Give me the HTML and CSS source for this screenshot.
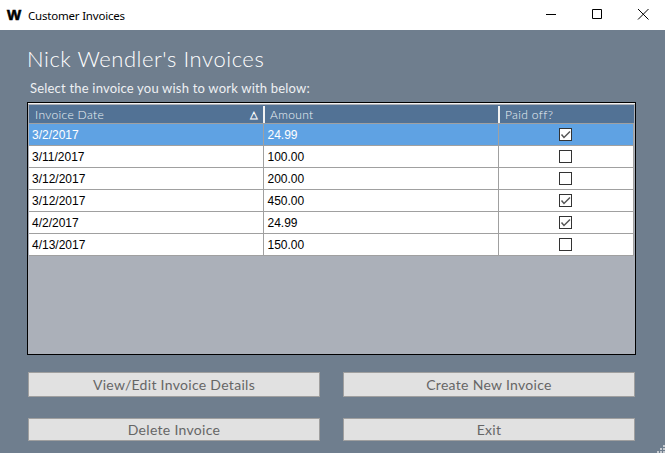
FILE: index.html
```html
<!DOCTYPE html>
<html lang="en">

<head>
    <meta charset="UTF-8">
    <title>Customer Invoices</title>
    <link rel="stylesheet" href="styles.css">
</head>

<body>
    <div class="titlebar">
        <span class="app_logo">W</span>
        <span class="app_name">Customer Invoices</span>
        <div class="win_btns">
            <svg class="win_btn" width="46" height="30" viewBox="0 0 46 30"><path d="M18 14.5H28" stroke="#000" fill="none"/></svg>
            <svg class="win_btn" width="46" height="30" viewBox="0 0 46 30"><path d="M18.5 9.5H27.5V18.5H18.5Z" stroke="#000" fill="none"/></svg>
            <svg class="win_btn" width="46" height="30" viewBox="0 0 46 30"><path d="M18 9L28.5 19.5M28.5 9L18 19.5" stroke="#000" fill="none"/></svg>
        </div>
    </div>

    <div class="content">
        <h1 class="heading">Nick Wendler's Invoices</h1>
        <p class="hint">Select the invoice you wish to work with below:</p>

        <div class="grid_box">
            <table class="grid">
                <thead>
                    <tr>
                        <th class="col_date"><span class="th_in">Invoice Date<span class="sort">&#9651;</span></span></th>
                        <th class="col_amount"><span class="th_in">Amount</span></th>
                        <th class="col_paid"><span class="th_in">Paid off?</span></th>
                    </tr>
                </thead>
                <tbody>
                    <tr class="selected">
                        <td>3/2/2017</td>
                        <td class="amount">24.99</td>
                        <td><span class="check checked"><svg width="11" height="11" viewBox="0 0 11 11"><path d="M1.5 5.5L4 8.5L10 2.5" stroke="#555" stroke-width="1.5" fill="none"/></svg></span></td>
                    </tr>
                    <tr>
                        <td>3/11/2017</td>
                        <td class="amount">100.00</td>
                        <td><span class="check"></span></td>
                    </tr>
                    <tr>
                        <td>3/12/2017</td>
                        <td class="amount">200.00</td>
                        <td><span class="check"></span></td>
                    </tr>
                    <tr>
                        <td>3/12/2017</td>
                        <td class="amount">450.00</td>
                        <td><span class="check checked"><svg width="11" height="11" viewBox="0 0 11 11"><path d="M1.5 5.5L4 8.5L10 2.5" stroke="#555" stroke-width="1.5" fill="none"/></svg></span></td>
                    </tr>
                    <tr>
                        <td>4/2/2017</td>
                        <td class="amount">24.99</td>
                        <td><span class="check checked"><svg width="11" height="11" viewBox="0 0 11 11"><path d="M1.5 5.5L4 8.5L10 2.5" stroke="#555" stroke-width="1.5" fill="none"/></svg></span></td>
                    </tr>
                    <tr>
                        <td>4/13/2017</td>
                        <td class="amount">150.00</td>
                        <td><span class="check"></span></td>
                    </tr>
                </tbody>
            </table>
        </div>

        <div class="buttons">
            <button class="btn tall">View/Edit Invoice Details</button>
            <button class="btn tall">Create New Invoice</button>
            <button class="btn">Delete Invoice</button>
            <button class="btn">Exit</button>
        </div>
    </div>

    <svg class="grip" width="9" height="9" viewBox="0 0 9 9" fill="#c4c9cf">
        <rect x="7" y="1" width="2" height="2"/>
        <rect x="4" y="4" width="2" height="2"/>
        <rect x="7" y="4" width="2" height="2"/>
        <rect x="1" y="7" width="2" height="2"/>
        <rect x="4" y="7" width="2" height="2"/>
        <rect x="7" y="7" width="2" height="2"/>
    </svg>
</body>

</html>
```

FILE: styles.css
```css
html, body {
    margin: 0;
    height: 453px;
    overflow: hidden;
}

body {
    position: relative;
    display: flex;
    flex-direction: column;
    background-color: #6f7e8e;
    font-family: "Lato", "Liberation Sans", sans-serif;
}

.titlebar {
    height: 30px;
    flex: none;
    display: flex;
    align-items: center;
    background-color: white;
    color: black;
}

.app_logo {
    width: 14px;
    margin-left: 7px;
    font-family: "Liberation Sans", sans-serif;
    font-weight: bold;
    font-size: 15px;
    -webkit-text-stroke: 0.6px black;
    line-height: 30px;
}

.app_name {
    margin-left: 7px;
    font-family: "Noto Sans", sans-serif;
    font-size: 11.5px;
    letter-spacing: -0.2px;
}

.win_btns {
    display: flex;
    margin-left: auto;
    margin-right: -1px;
}

.win_btn {
    display: block;
}

.content {
    flex: 1;
    padding: 15px 29px 0 27px;
}

.heading {
    margin: 0;
    height: 27px;
    font-size: 22px;
    line-height: 27px;
    font-weight: 300;
    color: white;
    letter-spacing: 0.55px;
}

.hint {
    margin: 9px 0 0 3px;
    height: 15px;
    font-size: 13px;
    line-height: 15px;
    font-weight: 400;
    color: #eef0f3;
    letter-spacing: 0.2px;
}

.grid_box {
    height: 253px;
    margin-top: 6px;
    box-sizing: border-box;
    border: 1px solid black;
    padding: 2px 1px 0 1px;
    background-color: #abb0b9;
    box-shadow: inset 0 1px 0 #f0f0f0;
}

.grid {
    width: 100%;
    table-layout: fixed;
    border-collapse: collapse;
    font-family: "Liberation Sans", sans-serif;
    font-size: 12px;
}

.grid th {
    height: 18px;
    padding: 0;
    background-color: #527295;
    border-bottom: 1px solid #a0a0a0;
    font-family: "Lato", sans-serif;
    font-size: 12px;
    font-weight: 300;
    text-align: left;
    color: #eef2f6;
    letter-spacing: 0.35px;
}

.th_in {
    display: flex;
    align-items: center;
    height: 17px;
    padding-left: 5px;
    padding-right: 5px;
    border-left: 2px solid #f2f2f2;
}

.col_date {
    width: 234px;
}

.col_date .th_in {
    padding-left: 4px;
    border-left-color: transparent;
}

.col_amount {
    width: 235px;
}

.sort {
    margin-left: auto;
    font-size: 10px;
    font-weight: bold;
    color: white;
}

.grid td {
    height: 21px;
    padding: 0 0 0 3px;
    background-color: white;
    border-bottom: 1px solid #a0a0a0;
    border-right: 1px solid #a0a0a0;
    color: black;
}

.grid td.amount {
    padding-left: 4px;
}

.grid td:last-child {
    padding: 0;
    text-align: center;
}

.grid .selected td {
    background-color: #5fa2e3;
    color: white;
}

.check {
    display: inline-block;
    box-sizing: border-box;
    width: 13px;
    height: 13px;
    margin-bottom: 1px;
    border: 1px solid #333;
    background-color: white;
    vertical-align: middle;
}

.check svg {
    display: block;
}

.buttons {
    display: grid;
    grid-template-columns: 292px 292px;
    grid-template-rows: 25px 23px;
    column-gap: 23px;
    row-gap: 21px;
    margin: 17px 0 0 1px;
}

.btn {
    padding: 0;
    border: 1px solid #9f9f9f;
    background-color: #e1e1e1;
    font-family: "Lato", sans-serif;
    font-size: 14px;
    color: #666;
    letter-spacing: 0.3px;
}

.grip {
    position: absolute;
    right: 0;
    bottom: 0;
}
```
